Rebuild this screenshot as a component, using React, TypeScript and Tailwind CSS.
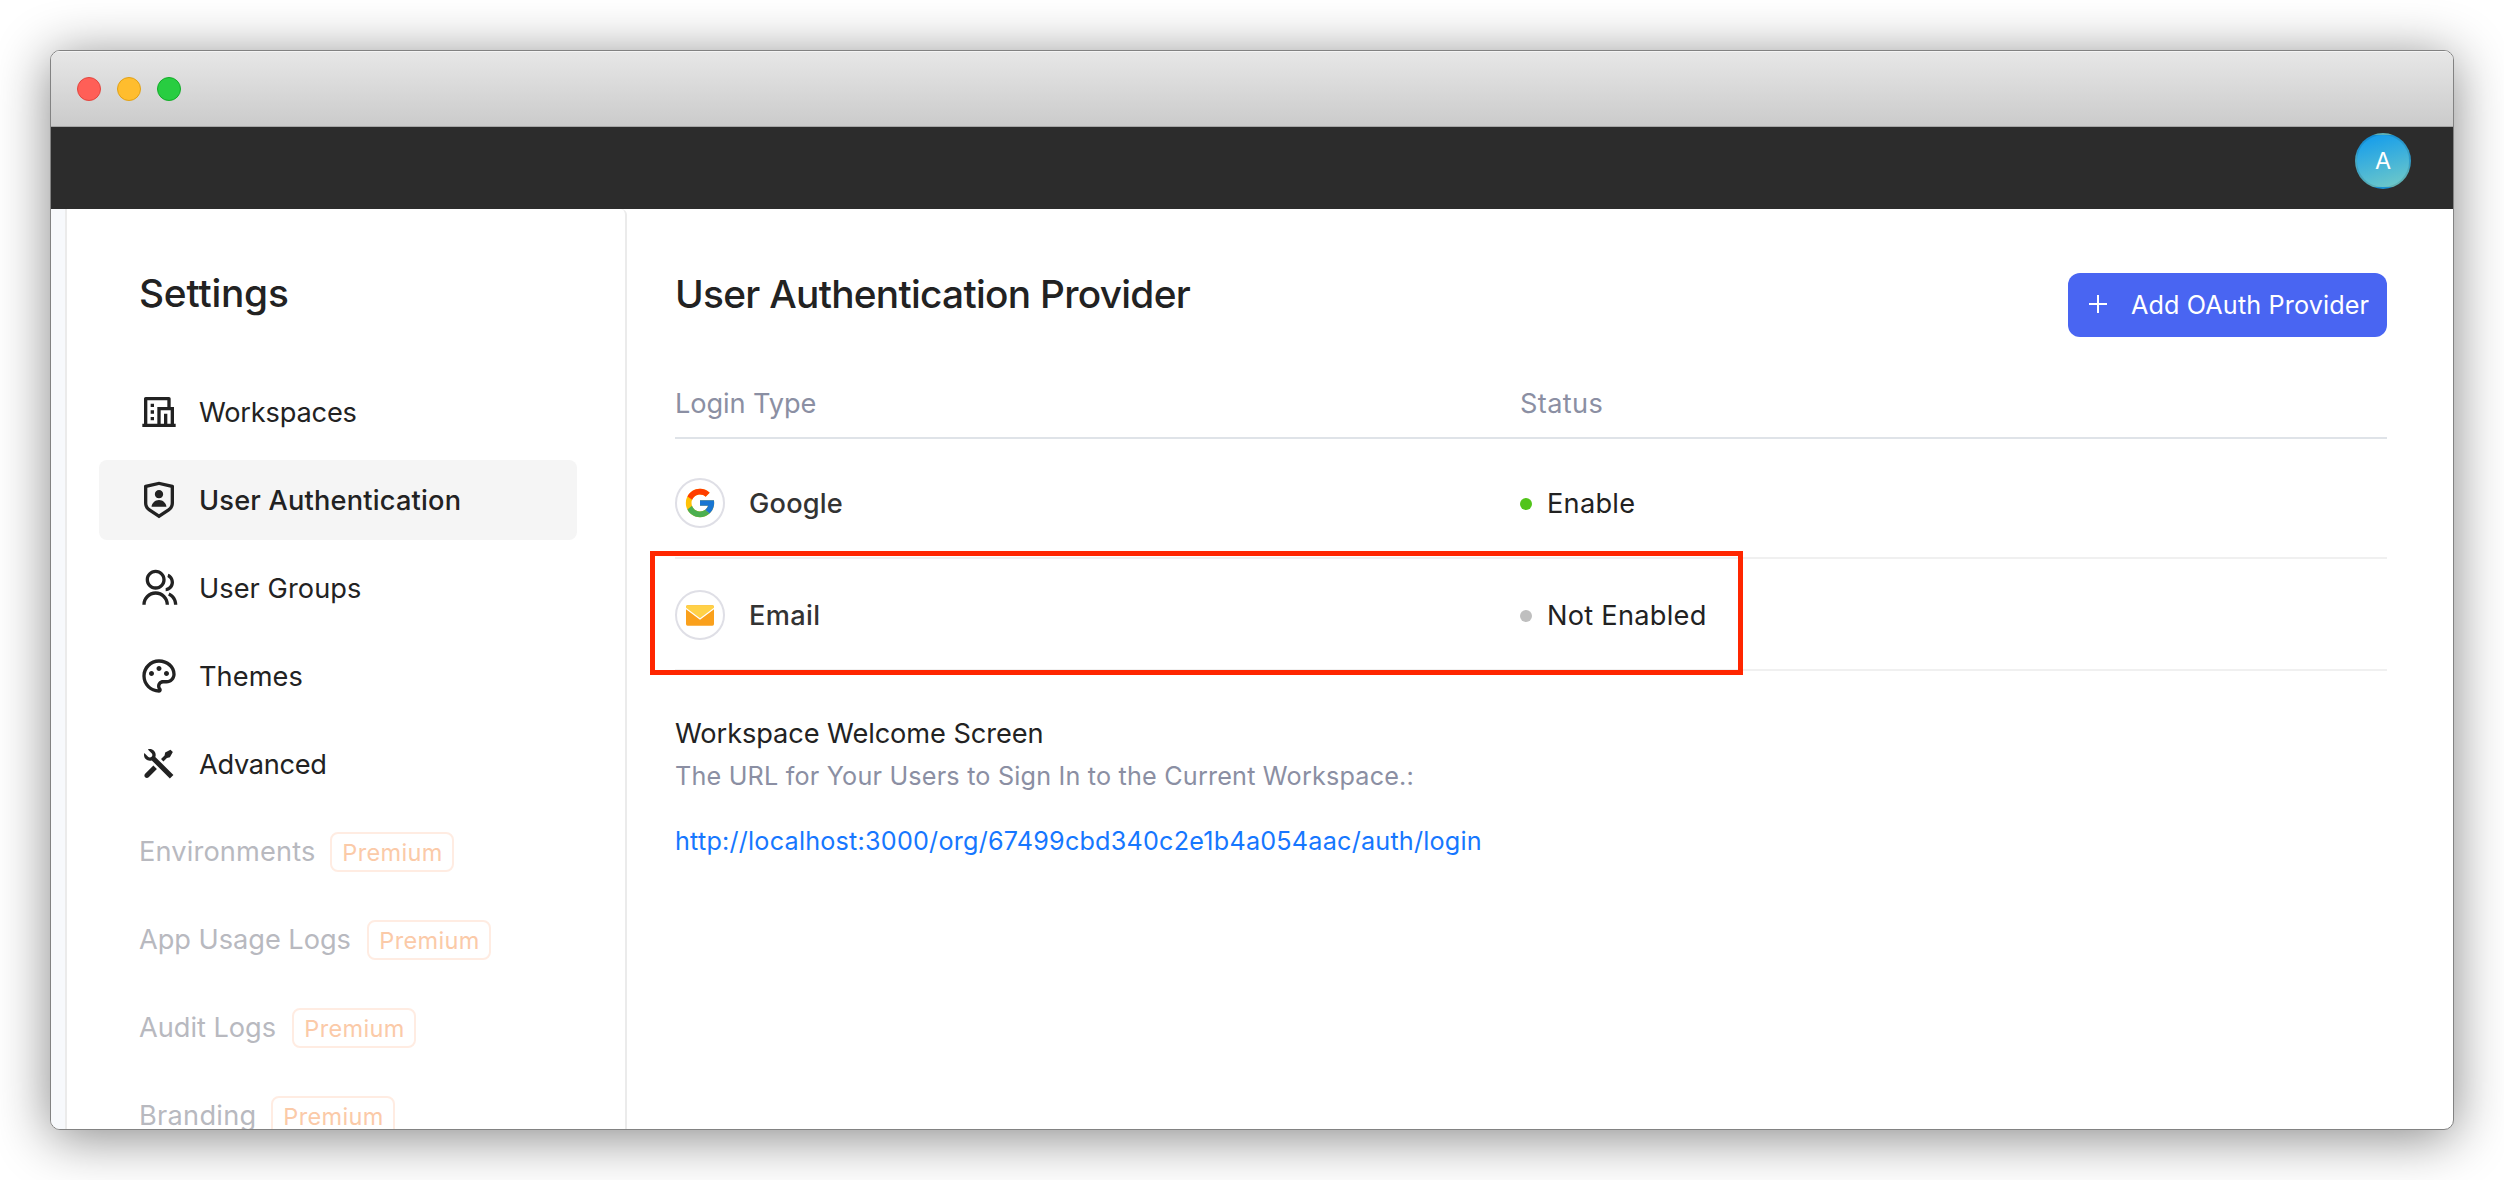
import type { ReactNode } from "react";
import { RiGroupLine, RiHotelLine, RiPaletteLine, RiShieldUserLine, RiToolsFill } from "react-icons/ri";
import { FcGoogle } from "react-icons/fc";

const menu = [
  { label: "Workspaces", icon: RiHotelLine, text: "tracking-[-0.18px]" },
  { label: "User Authentication", icon: RiShieldUserLine, text: "font-medium tracking-[0.2px]", active: true },
  { label: "User Groups", icon: RiGroupLine, text: "tracking-[0.06px]" },
  { label: "Themes", icon: RiPaletteLine, text: "tracking-[0.07px]" },
  { label: "Advanced", icon: RiToolsFill, text: "tracking-[-0.3px]" },
];

const premium = [
  { label: "Environments", text: "w-[175px] tracking-[0.15px]" },
  { label: "App Usage Logs", text: "w-[212px] tracking-[-0.04px]" },
  { label: "Audit Logs", text: "w-[137px] tracking-[-0.02px]" },
  { label: "Branding", text: "w-[116px] tracking-[0.26px]" },
];

function MailIcon() {
  return (
    <svg width="28" height="21" viewBox="0 0 28 21" className="shrink-0">
      <rect x="0" y="0.3" width="28" height="20.4" rx="1.6" fill="#faa01b" />
      <path d="M0 3.2V1.9C0 1 .7.3 1.6.3h24.8c.9 0 1.6.7 1.6 1.6v1.3L14 13.6z" fill="#ffd147" />
      <path d="M-.4 3.2 14 14.1 28.4 3.2" fill="none" stroke="#fff" strokeWidth="1.2" />
    </svg>
  );
}

function Sidebar() {
  return (
    <aside className="w-[562px] shrink-0 rounded-tr-[6px] border-x-2 border-[#ebebeb] px-[32px] pt-[60px]">
      <h2 className="mb-[55px] pl-[40px] text-[38.8px] leading-[48px] font-medium tracking-[-0.2px] text-[#222222]">Settings</h2>
      <nav className="flex flex-col gap-2">
        {menu.map(({ label, icon: Icon, text, active }) => (
          <div
            key={label}
            className={`flex h-[80px] w-[478px] items-center gap-[20px] rounded-lg pl-[40px] text-[27.2px] text-[#222222] ${active ? "bg-[#f5f5f5]" : ""}`}
          >
            <Icon className="size-[40px] shrink-0" />
            <span className={`pt-[2px] ${text}`}>{label}</span>
          </div>
        ))}
        {premium.map(({ label, text }) => (
          <div key={label} className="flex h-[80px] w-[478px] shrink-0 items-center gap-[16px] pl-[40px] text-[27.2px] text-[#b8b9bf]">
            <span className={`shrink-0 whitespace-nowrap ${text}`}>{label}</span>
            <span className="flex h-[40px] w-[124px] shrink-0 items-center justify-center rounded-lg border-2 border-[#ffece2] pt-[1px] pl-[1px] text-[23.5px] tracking-[0.35px] text-[#fbcaa8]">
              Premium
            </span>
          </div>
        ))}
      </nav>
    </aside>
  );
}

function ProviderRow({ icon, name, dot, status, children }: { icon: ReactNode; name: ReactNode; dot: string; status: ReactNode; children?: ReactNode }) {
  return (
    <div className="relative flex h-[112px] items-center border-b-2 border-[#f0f0f0] pt-[2px]">
      <div className="flex w-[845px] items-center gap-6">
        <div className="flex size-[50px] items-center justify-center rounded-full border-2 border-[#dfdfe6]">{icon}</div>
        <span className="pt-[2px] text-[27.2px] font-medium text-[#333333]">{name}</span>
      </div>
      <div className="flex items-center gap-[15px] text-[27.2px] tracking-[0.26px] text-[#222222]">
        <span className={`mt-[2px] size-3 rounded-full ${dot}`} />
        <span className="pt-[2px]">{status}</span>
      </div>
      {children}
    </div>
  );
}

function Main() {
  return (
    <main className="flex-1 pr-[66px] pl-[48px]">
      <div className="flex items-start justify-between pt-[61px]">
        <h1 className="text-[38.8px] leading-[48px] font-medium tracking-[-0.71px] text-[#222222]">User Authentication Provider</h1>
        <button className="mt-[3px] flex h-[64px] w-[319px] items-center rounded-xl bg-[#4965f2] pl-[20px] text-[25.2px] tracking-[0.13px] text-white">
          <svg width="20" height="20" viewBox="0 0 20 20" className="-mt-[2px] mr-[23px]">
            <path d="M10 1v18M1 10h18" stroke="#fff" strokeWidth="2" />
          </svg>
          <span className="pt-[2px]">Add OAuth Provider</span>
        </button>
      </div>
      <div className="mt-[31px] mb-2 flex h-[71px] items-center border-b-2 border-[#dfe3e8] pt-[3px] text-[27.2px] text-[#8b8fa3]">
        <span className="w-[845px] tracking-[-0.1px]">Login Type</span>
        <span className="tracking-[0.36px]">Status</span>
      </div>
      <ProviderRow
        icon={<FcGoogle className="size-[34px] shrink-0" />}
        name={<span className="tracking-[0.2px]">Google</span>}
        dot="bg-[#52c41a]"
        status="Enable"
      />
      <ProviderRow icon={<MailIcon />} name={<span className="tracking-[0.35px]">Email</span>} dot="bg-[#bfbfbf]" status="Not Enabled">
        <div className="absolute -top-[8px] -left-[25px] h-[124px] w-[1093px] border-[5px] border-[#ff2600]" />
      </ProviderRow>
      <p className="mt-[43px] text-[27.2px] leading-[40px] tracking-[-0.08px] text-[#222222]">Workspace Welcome Screen</p>
      <p className="text-[25.2px] leading-[44px] tracking-[0.19px] text-[#8b8fa3]">The URL for Your Users to Sign In to the Current Workspace.:</p>
      <a className="mt-[23px] block text-[25.2px] leading-[40px] tracking-[0.21px] text-[#1677ff]">
        http://localhost:3000/org/67499cbd340c2e1b4a054aac/auth/login
      </a>
    </main>
  );
}

export default function App() {
  return (
    <div className="h-[1180px] w-[2504px] overflow-hidden bg-white p-[50px] font-[Inter,sans-serif]">
      <div className="flex h-[1080px] w-[2404px] flex-col overflow-hidden rounded-[10px] border border-[#828282] bg-white shadow-[0_7px_54px_rgba(0,0,0,0.48)]">
        <div className="flex h-[76px] shrink-0 items-center gap-4 border-b border-[#a6a6a6] bg-linear-to-b from-[#e7e7e7] to-[#cbcbcb] pt-[1px] pl-[26px] shadow-[inset_0_1px_0_#f4f4f4]">
          <span className="size-6 rounded-full border border-[#e2463f] bg-[#ff5f57]" />
          <span className="size-6 rounded-full border border-[#e1a116] bg-[#ffbd2e]" />
          <span className="size-6 rounded-full border border-[#12ac28] bg-[#28cd41]" />
        </div>
        <header className="flex h-[82px] shrink-0 justify-end bg-[#2c2c2c] pt-[6px] pr-[42px]">
          <div className="flex size-[56px] items-center justify-center rounded-full border-2 border-black/10 bg-linear-[164deg] from-[#0f9aee] to-[#74cbc6] text-[23.3px] text-white">
            A
          </div>
        </header>
        <div className="flex min-h-0 flex-1 overflow-hidden">
          <div className="w-[14px] shrink-0 bg-[#f7f9fc]" />
          <Sidebar />
          <Main />
        </div>
      </div>
    </div>
  );
}
